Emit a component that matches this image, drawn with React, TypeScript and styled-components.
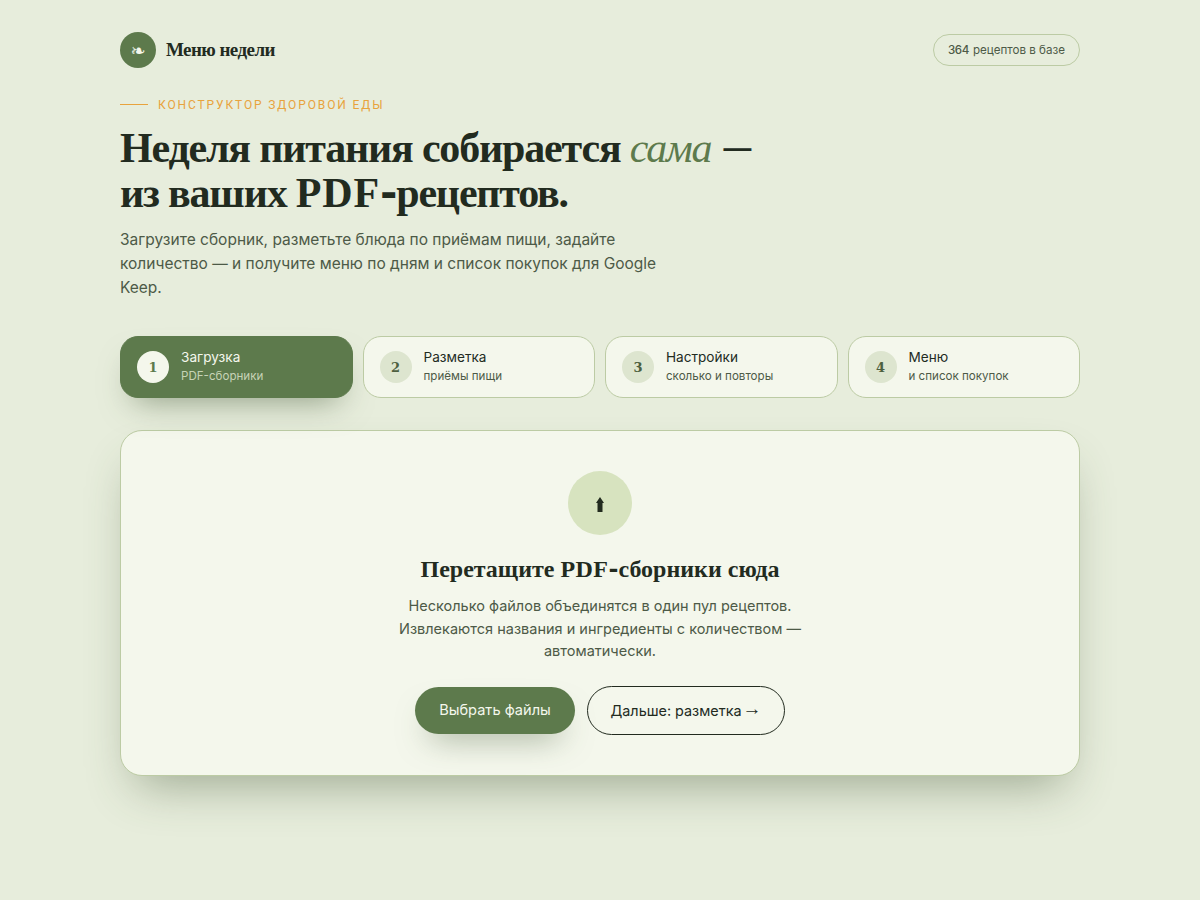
import React from "react";
import styled, { createGlobalStyle } from "styled-components";

const serif = `"Liberation Serif", serif`;
const sans = `Inter, "Liberation Sans", sans-serif`;

const GlobalStyle = createGlobalStyle`
  * {
    box-sizing: border-box;
  }
  html, body {
    margin: 0;
    min-height: 100%;
  }
  body {
    background: #e7eddc;
    color: #222b1f;
    font-family: ${sans};
  }
`;

const Page = styled.div`
  width: 960px;
  margin: 0 auto;
  padding: 32px 0 0;
  min-height: 900px;
`;

const Header = styled.header`
  display: flex;
  align-items: center;
  justify-content: space-between;
  height: 36px;
  margin-bottom: 28px;
`;

const Brand = styled.div`
  display: flex;
  align-items: center;
  gap: 10px;
`;

const BrandMark = styled.div`
  width: 36px;
  height: 36px;
  border-radius: 50%;
  background: #5d7a4c;
  color: #f4f7ec;
  display: flex;
  align-items: center;
  justify-content: center;
  font-size: 18px;
  font-family: "DejaVu Sans", sans-serif;
`;

const BrandName = styled.div`
  font-family: ${serif};
  font-weight: 700;
  font-size: 19px;
  letter-spacing: -0.57px;
`;

const CountPill = styled.div`
  height: 32px;
  padding: 0 14px;
  border: 1px solid #bccba4;
  border-radius: 16px;
  display: flex;
  align-items: center;
  gap: 4px;
  font-size: 11.6px;
  color: #4d5a47;
  & b {
    font-weight: 500;
    letter-spacing: -0.4px;
  }
`;

const Eyebrow = styled.div`
  display: flex;
  align-items: center;
  gap: 10px;
  font-family: Roboto, sans-serif;
  font-size: 12px;
  letter-spacing: 1.88px;
  color: #e8a33d;
  height: 17px;
  margin-bottom: 13px;
  &::before {
    content: "";
    width: 28px;
    height: 1px;
    background: #e8a33d;
  }
`;

const Title = styled.h1`
  margin: 0 0 11.2px;
  font-family: ${serif};
  font-weight: 700;
  font-size: 42px;
  line-height: 45.4px;
  letter-spacing: -1.18px;
  & em {
    font-weight: 400;
    color: #5d7a4c;
  }
`;

const TitleDash = styled.span`
  font-family: Lato, sans-serif;
  font-weight: 400;
  line-height: 0;
`;

const PdfWord = styled.span`
  letter-spacing: 0.02em;
`;

const PdfHyphen = styled.span`
  font-family: "DejaVu Serif", serif;
  line-height: 0;
`;

const Lead = styled.p`
  margin: 0 0 36px;
  width: 560px;
  font-size: 15.5px;
  line-height: 24px;
  color: #4d5a47;
`;

const Steps = styled.div`
  display: grid;
  grid-template-columns: repeat(4, 1fr);
  gap: 10px;
  margin-bottom: 32px;
`;

const Step = styled.div<{ $active?: boolean }>`
  height: 62px;
  padding: 0 16px;
  border-radius: 18px;
  display: flex;
  align-items: center;
  gap: 12px;
  border: 1px solid ${({ $active }) => ($active ? "#5d7a4c" : "#bccba4")};
  background: ${({ $active }) => ($active ? "#5d7a4c" : "#f4f7ec")};
  box-shadow: ${({ $active }) => ($active ? "0 16px 32px -14px rgba(61, 82, 48, 0.55)" : "none")};
`;

const StepNumber = styled.div<{ $active?: boolean }>`
  width: 32px;
  height: 32px;
  border-radius: 50%;
  flex: none;
  display: flex;
  align-items: center;
  justify-content: center;
  font-family: "DejaVu Serif", serif;
  font-weight: 700;
  font-size: 13px;
  color: ${({ $active }) => ($active ? "#5d7a4c" : "#4d6040")};
  background: ${({ $active }) => ($active ? "#f4f7ec" : "#dde5cf")};
`;

const StepText = styled.div`
  display: flex;
  flex-direction: column;
  gap: 2px;
  padding-bottom: 2px;
`;

const StepTitle = styled.div<{ $active?: boolean }>`
  font-size: 13.6px;
  line-height: 18px;
  color: ${({ $active }) => ($active ? "#f4f7ec" : "#222b1f")};
`;

const StepHint = styled.div<{ $active?: boolean }>`
  font-size: 11.6px;
  line-height: 16px;
  color: ${({ $active }) => ($active ? "#c6d3b6" : "#4d5a47")};
`;

const Card = styled.section`
  height: 346px;
  padding: 40px 0 0;
  border: 1px solid #bccba4;
  border-radius: 22px;
  background: #f4f7ec;
  box-shadow: 0 24px 48px -16px rgba(61, 82, 48, 0.45);
  display: flex;
  flex-direction: column;
  align-items: center;
`;

const UploadIcon = styled.div`
  width: 64px;
  height: 64px;
  border-radius: 50%;
  background: #d7e3bf;
  display: flex;
  align-items: center;
  justify-content: center;
  margin-bottom: 18px;
  padding-top: 3px;
`;

const CardTitle = styled.h2`
  margin: 0 0 10px;
  font-family: ${serif};
  font-weight: 700;
  font-size: 24px;
  line-height: 32px;
`;

const CardText = styled.p`
  margin: 0 0 23px;
  width: 420px;
  text-align: center;
  font-size: 14.5px;
  line-height: 22.5px;
  color: #4d5a47;
`;

const Actions = styled.div`
  display: flex;
  align-items: center;
  gap: 12px;
`;

const PrimaryButton = styled.button`
  width: 160px;
  height: 47px;
  border: 0;
  border-radius: 24px;
  background: #5d7a4c;
  color: #f4f7ec;
  font-family: ${sans};
  font-size: 14.6px;
  box-shadow: 0 16px 32px -14px rgba(61, 82, 48, 0.55);
`;

const GhostButton = styled.button`
  width: 198px;
  height: 49px;
  border: 1px solid #222b1f;
  border-radius: 25px;
  background: transparent;
  color: #222b1f;
  font-family: ${sans};
  font-size: 14.4px;
`;

const ArrowGlyph = styled.span`
  font-family: "Liberation Sans", sans-serif;
  font-size: 19px;
  line-height: 0;
  vertical-align: 1px;
  margin-left: 1px;
`;

const steps = [
  { title: "Загрузка", hint: "PDF-сборники" },
  { title: "Разметка", hint: "приёмы пищи" },
  { title: "Настройки", hint: "сколько и повторы" },
  { title: "Меню", hint: "и список покупок" },
];

export default function App() {
  return (
    <Page>
      <GlobalStyle />
      <Header>
        <Brand>
          <BrandMark>❧</BrandMark>
          <BrandName>Меню недели</BrandName>
        </Brand>
        <CountPill>
          <b>364</b> рецептов в базе
        </CountPill>
      </Header>
      <Eyebrow>КОНСТРУКТОР ЗДОРОВОЙ ЕДЫ</Eyebrow>
      <Title>
        Неделя питания собирается <em>сама</em> <TitleDash>—</TitleDash>
        <br />
        из ваших <PdfWord>PDF</PdfWord>
        <PdfHyphen>-</PdfHyphen>рецептов.
      </Title>
      <Lead>
        Загрузите сборник, разметьте блюда по приёмам пищи, задайте количество — и получите меню по дням и
        список покупок для Google Keep.
      </Lead>
      <Steps>
        {steps.map((step, index) => (
          <Step key={step.title} $active={index === 0}>
            <StepNumber $active={index === 0}>{index + 1}</StepNumber>
            <StepText>
              <StepTitle $active={index === 0}>{step.title}</StepTitle>
              <StepHint $active={index === 0}>{step.hint}</StepHint>
            </StepText>
          </Step>
        ))}
      </Steps>
      <Card>
        <UploadIcon>
          <svg width="8" height="15" viewBox="0 0 8 15" fill="#222b1f">
            <polygon points="4,0 8,6 6.5,6 6.5,15 1.5,15 1.5,6 0,6" />
          </svg>
        </UploadIcon>
        <CardTitle>
          Перетащите <PdfWord>PDF</PdfWord>
          <PdfHyphen>-</PdfHyphen>сборники сюда
        </CardTitle>
        <CardText>
          Несколько файлов объединятся в один пул рецептов. Извлекаются названия и ингредиенты с количеством —
          автоматически.
        </CardText>
        <Actions>
          <PrimaryButton>Выбрать файлы</PrimaryButton>
          <GhostButton>
            Дальше: разметка<ArrowGlyph>→</ArrowGlyph>
          </GhostButton>
        </Actions>
      </Card>
    </Page>
  );
}
